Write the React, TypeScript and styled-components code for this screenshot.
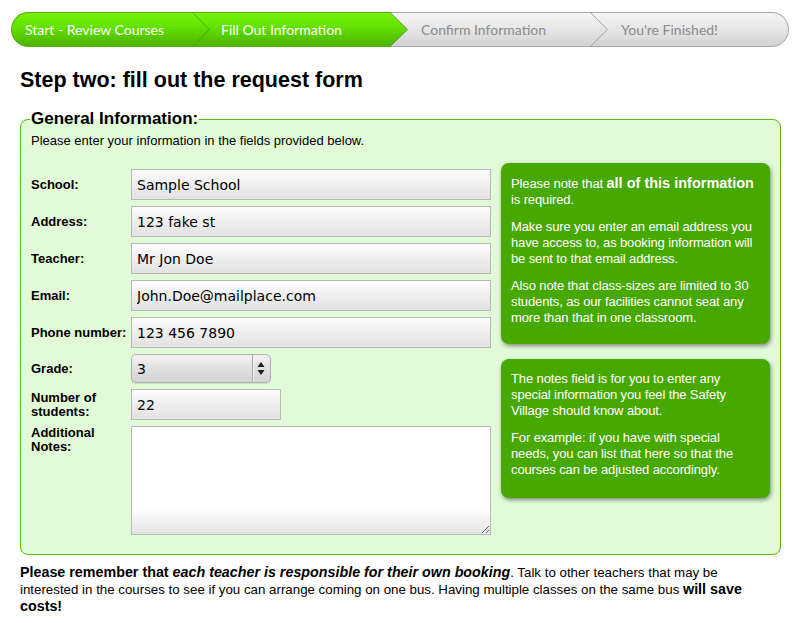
import React from 'react';
import styled, { createGlobalStyle, css } from 'styled-components';

const GlobalStyle = createGlobalStyle`
  html, body { margin: 0; padding: 0; background: #ffffff; }
  body { font-family: "Liberation Sans", Arial, Helvetica, sans-serif; color: #000; }
  * { box-sizing: border-box; }
`;

const Page = styled.div`
  width: 802px;
  padding-top: 12px;
`;

/* ---------- progress bar ---------- */

type StepState = 'done' | 'todo';

const StepBar = styled.nav`
  display: flex;
  height: 35px;
  margin: 0 13px 0 11px;
  font-family: Lato, "Open Sans", sans-serif;
  font-size: 14px;
`;

const Step = styled.div<{
  $state: StepState;
  $first?: boolean;
  $last?: boolean;
  $width?: number;
  $pad: number;
  $z: number;
}>`
  position: relative;
  z-index: ${(p) => p.$z};
  flex: ${(p) => (p.$width ? `0 0 ${p.$width}px` : '1 1 auto')};
  margin-right: ${(p) => (p.$last ? 0 : -18)}px;
  padding-left: ${(p) => p.$pad}px;
  padding-bottom: 1px;
  display: flex;
  align-items: center;
  white-space: nowrap;
  border-top: 1px solid;
  border-bottom: 1px solid;
  border-left: ${(p) => (p.$first ? '1px solid' : 'none')};
  border-right: ${(p) => (p.$last ? '1px solid' : 'none')};
  border-radius: ${(p) => (p.$first ? '18px 0 0 18px' : p.$last ? '0 18px 18px 0' : '0')};
  ${(p) =>
    p.$state === 'done'
      ? css`
          color: #ffffff;
          border-color: #55ad0e;
          background: linear-gradient(#74f20a, #62e000 45%, #4db300);
          clip-path: polygon(0 0, calc(100% - 18px) 0, 100% 50%, calc(100% - 18px) 100%, 0 100%);
        `
      : css`
          color: #8a8a8a;
          border-color: #a9a9a9;
          background: linear-gradient(#f6f6f6, #e6e6e6 50%, #d2d2d2);
        `}
`;

const Chevron = styled.svg`
  position: absolute;
  top: -1px;
  right: 0;
  width: 18px;
  height: 35px;
  overflow: visible;
`;

const steps: { label: string; state: StepState; width?: number; pad: number; line: string }[] = [
  { label: 'Start - Review Courses', state: 'done', width: 199, pad: 13, line: '#3f9a06' },
  { label: 'Fill Out Information', state: 'done', width: 216, pad: 29, line: '#6d8f52' },
  { label: 'Confirm Information', state: 'todo', width: 218, pad: 31, line: '#a2a2a2' },
  { label: "You're Finished!", state: 'todo', pad: 31, line: '' },
];

function Progress() {
  return (
    <StepBar>
      {steps.map((s, i) => (
        <Step
          key={s.label}
          $state={s.state}
          $first={i === 0}
          $last={i === steps.length - 1}
          $width={s.width}
          $pad={s.pad}
          $z={10 - i}
        >
          {s.label}
          {s.line && (
            <Chevron viewBox="0 0 18 35" preserveAspectRatio="none">
              <polyline points="0,0 17.3,17.5 0,35" fill="none" stroke={s.line} strokeWidth="1" />
            </Chevron>
          )}
        </Step>
      ))}
    </StepBar>
  );
}

/* ---------- content ---------- */

const Content = styled.main`
  padding: 0 21px 0 20px;
`;

const Heading = styled.h1`
  margin: 21px 0 0;
  font-size: 21.5px;
  line-height: 25px;
  font-weight: bold;
`;

const Fieldset = styled.fieldset`
  margin: 16px 0 0;
  padding: 0 10px 19px;
  border: 1px solid #5cbf0c;
  border-radius: 8px;
  background: #e1fbd9;
  min-width: 0;
`;

const Legend = styled.legend`
  padding: 0 1px;
  margin-left: -1px;
  font-size: 17px;
  line-height: 20px;
  font-weight: bold;
`;

const Intro = styled.p`
  margin: 4px 0 0;
  font-size: 13px;
  line-height: 15px;
`;

const FormRow = styled.div`
  display: flex;
  align-items: flex-start;
  gap: 10px;
  margin-top: 15px;
`;

const FormGrid = styled.div`
  display: grid;
  grid-template-columns: 100px 360px;
  row-gap: 6px;
  align-items: center;
  padding-top: 6px;
`;

const Label = styled.label<{ $top?: boolean }>`
  font-size: 13px;
  line-height: 14px;
  font-weight: bold;
  align-self: ${(p) => (p.$top ? 'start' : 'center')};
`;

const fieldBase = css`
  margin: 0;
  font-family: "DejaVu Sans", "Lucida Grande", Verdana, sans-serif;
  font-size: 14px;
  color: #000;
  border: 1px solid #b8b8b8;
  outline: none;
`;

const TextInput = styled.input<{ $width?: number }>`
  ${fieldBase}
  display: block;
  width: ${(p) => p.$width ?? 360}px;
  height: 31px;
  padding: 0 5px;
  background: linear-gradient(#fdfdfd, #f1f1f1 40%, #e2e2e2);
`;

const NotesArea = styled.textarea`
  ${fieldBase}
  display: block;
  width: 360px;
  height: 109px;
  padding: 4px 5px;
  resize: both;
  background: linear-gradient(#ffffff 0, #ffffff 76%, #e3e3e3 100%);
`;

const SelectWrap = styled.div`
  position: relative;
  width: 140px;
  height: 29px;
`;

const GradeSelect = styled.select`
  ${fieldBase}
  appearance: none;
  -webkit-appearance: none;
  display: block;
  width: 100%;
  height: 100%;
  padding: 0 0 0 5px;
  border-color: #b0b0b0;
  border-radius: 5px;
  background: linear-gradient(#f3f3f3, #e2e2e2 45%, #d3d3d3);
  box-shadow: 0 1px 1px rgba(0, 0, 0, 0.12);
`;

const SelectArrows = styled.svg`
  position: absolute;
  top: 0;
  right: 0;
  width: 19px;
  height: 29px;
  pointer-events: none;
`;

const Aside = styled.aside`
  width: 270px;
  display: flex;
  flex-direction: column;
  gap: 15px;
`;

const NoteBox = styled.div<{ $height: number }>`
  height: ${(p) => p.$height}px;
  padding: 12px 10px 10px;
  border-radius: 8px;
  background: #47a800;
  color: #ffffff;
  box-shadow: 1px 2px 4px rgba(0, 0, 0, 0.45);
  font-size: 13px;
  line-height: 16px;
  letter-spacing: -0.12px;
  display: flex;
  flex-direction: column;
  gap: 11px;
`;

const NoteText = styled.p`
  margin: 0;
`;

const Strong = styled.strong<{ $big?: boolean }>`
  font-weight: bold;
  font-size: ${(p) => (p.$big ? '14.5px' : 'inherit')};
  letter-spacing: 0;
`;

const Reminder = styled.p`
  margin: 9px 10px 0 0;
  font-size: 13.3px;
  line-height: 17px;
`;

const ReminderStrong = styled.strong`
  font-weight: bold;
  font-size: 14.3px;
`;

export default function App() {
  return (
    <Page>
      <GlobalStyle />
      <Progress />
      <Content>
        <Heading>Step two: fill out the request form</Heading>
        <Fieldset>
          <Legend>General Information:</Legend>
          <Intro>Please enter your information in the fields provided below.</Intro>
          <FormRow>
            <FormGrid>
              <Label htmlFor="school">School:</Label>
              <TextInput id="school" defaultValue="Sample School" />
              <Label htmlFor="address">Address:</Label>
              <TextInput id="address" defaultValue="123 fake st" />
              <Label htmlFor="teacher">Teacher:</Label>
              <TextInput id="teacher" defaultValue="Mr Jon Doe" />
              <Label htmlFor="email">Email:</Label>
              <TextInput id="email" defaultValue="John.Doe@mailplace.com" />
              <Label htmlFor="phone">Phone number:</Label>
              <TextInput id="phone" defaultValue="123 456 7890" />
              <Label htmlFor="grade">Grade:</Label>
              <SelectWrap>
                <GradeSelect id="grade" defaultValue="3">
                  <option value="1">1</option>
                  <option value="2">2</option>
                  <option value="3">3</option>
                  <option value="4">4</option>
                  <option value="5">5</option>
                  <option value="6">6</option>
                </GradeSelect>
                <SelectArrows viewBox="0 0 19 29">
                  <line x1="0.5" y1="1" x2="0.5" y2="28" stroke="#a6a6a6" />
                  <line x1="1.5" y1="1" x2="1.5" y2="28" stroke="#f4f4f4" />
                  <polygon points="5.5,13 9,8 12.5,13" fill="#1e1e1e" />
                  <polygon points="5.5,16 12.5,16 9,21" fill="#1e1e1e" />
                </SelectArrows>
              </SelectWrap>
              <Label htmlFor="students">Number of students:</Label>
              <TextInput id="students" $width={150} defaultValue="22" />
              <Label htmlFor="notes" $top>
                Additional Notes:
              </Label>
              <NotesArea id="notes" />
            </FormGrid>
            <Aside>
              <NoteBox $height={181}>
                <NoteText>
                  Please note that <Strong $big>all of this information</Strong> is required.
                </NoteText>
                <NoteText>
                  Make sure you enter an email address you have access to, as booking information will be
                  sent to that email address.
                </NoteText>
                <NoteText>
                  Also note that class-sizes are limited to 30 students, as our facilities cannot seat any
                  more than that in one classroom.
                </NoteText>
              </NoteBox>
              <NoteBox $height={139}>
                <NoteText>
                  The notes field is for you to enter any special information you feel the Safety Village
                  should know about.
                </NoteText>
                <NoteText>
                  For example: if you have with special needs, you can list that here so that the courses can
                  be adjusted accordingly.
                </NoteText>
              </NoteBox>
            </Aside>
          </FormRow>
        </Fieldset>
        <Reminder>
          <ReminderStrong>Please remember that </ReminderStrong>
          <ReminderStrong>
            <em>each teacher is responsible for their own booking</em>
          </ReminderStrong>
          . Talk to other teachers that may be interested in the courses to see if you can arrange coming on
          one bus. Having multiple classes on the same bus <ReminderStrong>will save costs!</ReminderStrong>
        </Reminder>
      </Content>
    </Page>
  );
}
